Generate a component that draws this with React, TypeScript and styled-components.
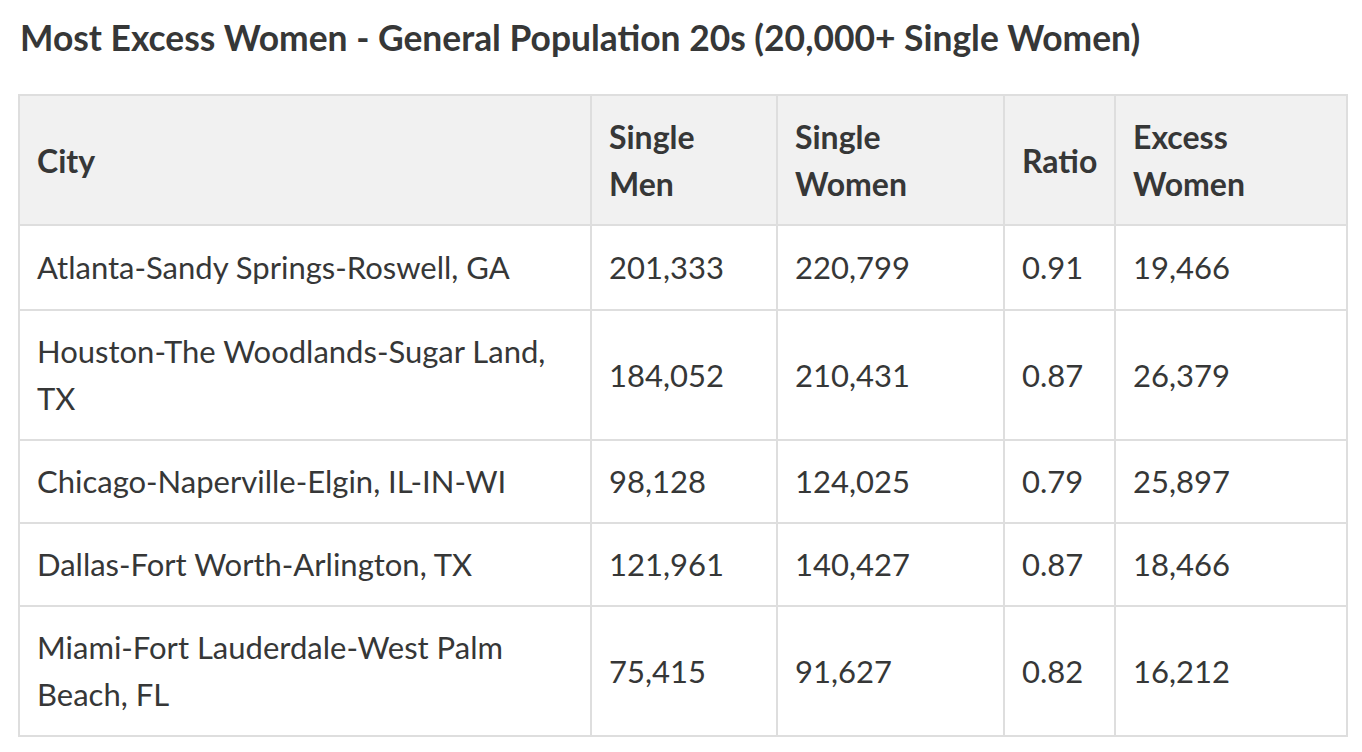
import React from "react";
import styled, { createGlobalStyle } from "styled-components";

const GlobalStyle = createGlobalStyle`
  html, body {
    margin: 0;
    padding: 0;
    background: #ffffff;
  }
  body {
    font-family: Lato, "Open Sans", sans-serif;
    color: #363737;
  }
`;

const Page = styled.div`
  padding: 14px 0 0 18px;
  width: 1330px;
`;

const Title = styled.h3`
  margin: 0 0 32px 2px;
  font-size: 35.4px;
  font-weight: 700;
  line-height: 48px;
  color: #363737;
`;

const Table = styled.table`
  border-collapse: collapse;
  table-layout: fixed;
  width: 1330px;
  border: 2px solid #dedede;
`;

const HeadCell = styled.th<{ $w: number }>`
  box-sizing: border-box;
  width: ${(p) => p.$w}px;
  background: #f1f1f1;
  border: 2px solid #dedede;
  padding: 17px 17px;
  text-align: left;
  font-size: 32px;
  font-weight: 700;
  line-height: 47px;
`;

const Row = styled.tr`
  &:first-child td {
    padding-top: 18px;
    padding-bottom: 18px;
  }
`;

const Cell = styled.td`
  border: 2px solid #dedede;
  padding: 17px 17px;
  font-size: 31px;
  font-weight: 400;
  line-height: 47px;
  vertical-align: middle;
`;

const headers: { label: React.ReactNode; w: number }[] = [
  { label: "City", w: 572 },
  { label: <>Single<br />Men</>, w: 186 },
  { label: <>Single<br />Women</>, w: 227 },
  { label: "Ratio", w: 111 },
  { label: <>Excess<br />Women</>, w: 232 },
];

const rows = [
  ["Atlanta-Sandy Springs-Roswell, GA", "201,333", "220,799", "0.91", "19,466"],
  ["Houston-The Woodlands-Sugar Land, TX", "184,052", "210,431", "0.87", "26,379"],
  ["Chicago-Naperville-Elgin, IL-IN-WI", "98,128", "124,025", "0.79", "25,897"],
  ["Dallas-Fort Worth-Arlington, TX", "121,961", "140,427", "0.87", "18,466"],
  ["Miami-Fort Lauderdale-West Palm Beach, FL", "75,415", "91,627", "0.82", "16,212"],
];

export default function App() {
  return (
    <>
      <GlobalStyle />
      <Page>
        <Title>Most Excess Women - General Population 20s (20,000+ Single Women)</Title>
        <Table>
          <thead>
            <tr>
              {headers.map((h, i) => (
                <HeadCell key={i} $w={h.w}>
                  {h.label}
                </HeadCell>
              ))}
            </tr>
          </thead>
          <tbody>
            {rows.map((r) => (
              <Row key={r[0]}>
                {r.map((c, i) => (
                  <Cell key={i}>{c}</Cell>
                ))}
              </Row>
            ))}
          </tbody>
        </Table>
      </Page>
    </>
  );
}
